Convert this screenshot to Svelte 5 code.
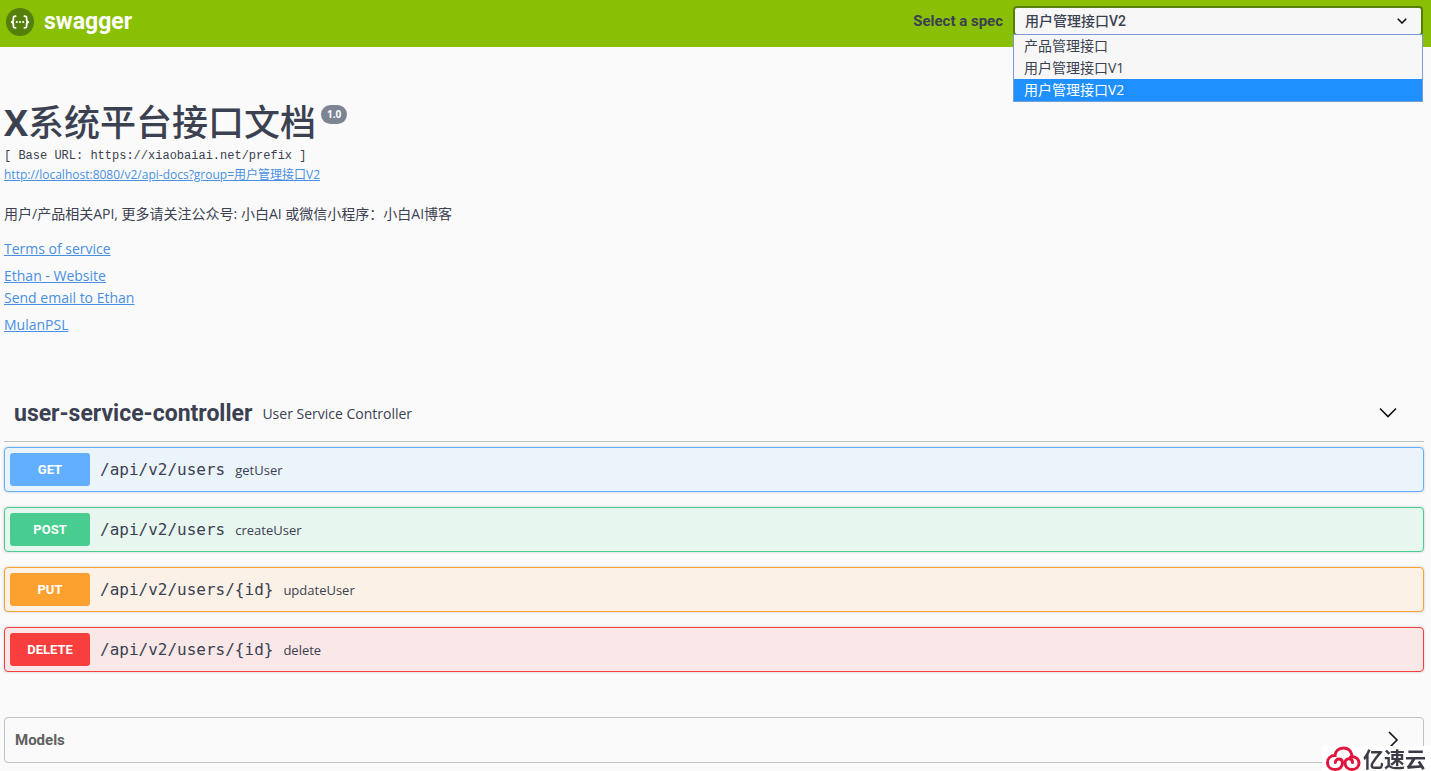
<script lang="ts">
	const specs = ['产品管理接口', '用户管理接口V1', '用户管理接口V2'];

	const operations = [
		{ method: 'get', path: '/api/v2/users', summary: 'getUser' },
		{ method: 'post', path: '/api/v2/users', summary: 'createUser' },
		{ method: 'put', path: '/api/v2/users/{id}', summary: 'updateUser' },
		{ method: 'delete', path: '/api/v2/users/{id}', summary: 'delete' }
	];

	let selected = $state('用户管理接口V2');
	let open = $state(true);

	function pick(spec: string) {
		selected = spec;
		open = false;
	}
</script>

<header class="topbar">
	<a class="logo" href="/">
		<svg width="28" height="28" viewBox="0 0 28 28" fill="none">
			<circle cx="14" cy="14" r="14" fill="#547f0b" />
			<g stroke="#fff" stroke-width="1.8" stroke-linecap="round" stroke-linejoin="round">
				<path d="M9.6 8.2c-2 0-2.3.7-2.2 2.4.1 2 .1 3-1.6 3.4 1.7.4 1.7 1.4 1.6 3.4-.1 1.7.2 2.4 2.2 2.4" />
				<path d="M18.4 8.2c2 0 2.3.7 2.2 2.4-.1 2-.1 3 1.6 3.4-1.7.4-1.7 1.4-1.6 3.4.1 1.7-.2 2.4-2.2 2.4" />
			</g>
			<g fill="#fff">
				<circle cx="10.8" cy="14" r="1.1" />
				<circle cx="14" cy="14" r="1.1" />
				<circle cx="17.2" cy="14" r="1.1" />
			</g>
		</svg>
		<span>swagger</span>
	</a>

	<div class="spec-picker">
		<label for="spec">Select a spec</label>
		<div class="select-wrap">
			<select id="spec" bind:value={selected}>
				{#each specs as spec}
					<option value={spec}>{spec}</option>
				{/each}
			</select>
			<svg class="caret" width="10" height="6" viewBox="0 0 10 6" fill="none" stroke="#111" stroke-width="1.6">
				<path d="M.8.8 5 5 9.2.8" />
			</svg>
			{#if open}
				<ul class="options">
					{#each specs as spec}
						<li>
							<button type="button" class:active={spec === selected} onclick={() => pick(spec)}>{spec}</button>
						</li>
					{/each}
				</ul>
			{/if}
		</div>
	</div>
</header>

<main>
	<section class="info">
		<div class="title">
			<h2><b>X</b>系统平台接口文档</h2>
			<span class="version">1.0</span>
		</div>
		<pre class="base-url">[ Base URL: https://xiaobaiai.net/prefix ]</pre>
		<a class="docs" href="http://localhost:8080/v2/api-docs?group=用户管理接口V2">http://localhost:8080/v2/api-docs?group=用户管理接口V2</a>
		<p>用户/产品相关API, 更多请关注公众号: 小白AI 或微信小程序：小白AI博客</p>
		<div class="links">
			<a href="#terms">Terms of service</a>
			<div class="contact">
				<a href="#website">Ethan - Website</a>
				<a href="#email">Send email to Ethan</a>
			</div>
			<a href="#license">MulanPSL</a>
		</div>
	</section>

	<section>
		<div class="tag">
			<h3>user-service-controller</h3>
			<small>User Service Controller</small>
			<button type="button" class="toggle" aria-label="Collapse operations">
				<svg width="20" height="20" viewBox="0 0 20 20" fill="none" stroke="#111" stroke-width="1.6">
					<path d="m2 4.5 8 8 8-8" />
				</svg>
			</button>
		</div>
		<div class="operations">
			{#each operations as op}
				<div class="opblock {op.method}">
					<button type="button" class="method">{op.method.toUpperCase()}</button>
					<span class="path">{op.path}</span>
					<span class="summary">{op.summary}</span>
				</div>
			{/each}
		</div>
	</section>

	<section class="models">
		<h4>Models</h4>
		<button type="button" class="toggle" aria-label="Expand models">
			<svg width="20" height="20" viewBox="0 0 20 20" fill="none" stroke="#111" stroke-width="1.6">
				<path d="m6 2 8 8-8 8" />
			</svg>
		</button>
	</section>
</main>

<div class="watermark">
	<svg width="36" height="25" viewBox="0 0 36 25" fill="none" stroke="#e0143c" stroke-width="3" stroke-linecap="round">
		<path d="M27 9.500C26 4.500 22.500 2 18.500 2 13.500 2 10 5.500 10 9.500 5.500 9.500 2.500 12.500 2.500 16.500s3 7 7.500 7c4.500 0 7.500-2.500 7.500-6.500 0-2.500-1.500-4-3.500-4s-3.700 1.600-3.700 3.500" />
		<path d="M25.500 11c5-1 8.500 2 8.500 6 0 4-3 6.500-7 6.500-4.500 0-7-3-7-6.500 0-2.500 1.700-4.200 3.800-4.200 2.200 0 3.700 1.500 3.700 3.700" />
	</svg>
	<span>亿速云</span>
</div>

<style>
	:global(body) {
		margin: 0;
		background: #fafafa;
		color: #3b4151;
		font-family: 'Open Sans', 'Noto Sans CJK SC', sans-serif;
		font-size: 14px;
	}

	h2,
	h3,
	h4,
	p,
	pre,
	ul {
		margin: 0;
		padding: 0;
	}

	button {
		border: 0;
		padding: 0;
		background: transparent;
		color: inherit;
		font: inherit;
		cursor: pointer;
	}

	.topbar {
		display: flex;
		align-items: flex-start;
		justify-content: space-between;
		box-sizing: border-box;
		height: 47px;
		padding: 6px 8px 0 6px;
		background: #89bf04;
	}

	.logo {
		display: flex;
		align-items: center;
		gap: 10px;
		height: 32px;
		color: #fff;
		font: 700 23px/32px Roboto, sans-serif;
		text-decoration: none;
	}

	.spec-picker {
		display: flex;
		align-items: center;
		gap: 10px;
	}

	.spec-picker label {
		font: 700 15px/30px Roboto, sans-serif;
	}

	.select-wrap {
		position: relative;
		width: 410px;
	}

	select {
		display: block;
		width: 100%;
		height: 30px;
		padding: 0 10px;
		border: 2px solid #547f00;
		border-radius: 4px;
		outline: 0;
		appearance: none;
		background: #f7f7f7;
		color: #3b4151;
		font: 500 14px/24px Roboto, 'Noto Sans CJK SC', sans-serif;
	}

	.caret {
		position: absolute;
		top: 12px;
		right: 16px;
		pointer-events: none;
	}

	.options {
		position: absolute;
		top: 28px;
		left: 0;
		right: 0;
		z-index: 1;
		border: 1px solid #7a9cd3;
		background: #f7f7f7;
		list-style: none;
	}

	.options button {
		display: block;
		width: 100%;
		padding: 0 10px;
		font: 14px/22px 'Open Sans', 'Noto Sans CJK SC', sans-serif;
		text-align: left;
	}

	.options .active {
		background: #1e90ff;
		color: #fff;
	}

	main {
		padding: 51px 7px 0 4px;
	}

	.info {
		display: flex;
		flex-direction: column;
		align-items: flex-start;
	}

	a {
		color: #4990e2;
	}

	.title {
		display: flex;
		align-items: flex-start;
		gap: 5px;
	}

	h2 {
		font: 500 36px/50px 'Open Sans', 'Noto Sans CJK SC', sans-serif;
	}

	h2 b {
		font-family: 'Open Sans', sans-serif;
		font-weight: 700;
	}

	.version {
		margin-top: 7px;
		padding: 0 6px;
		border-radius: 10px;
		background: #7d8492;
		color: #fff;
		font: 700 10px/19px 'Open Sans', sans-serif;
	}

	.base-url {
		font: 12px/16px 'Liberation Mono', monospace;
	}

	.docs {
		font-size: 12px;
		line-height: 22px;
	}

	.info p {
		margin-top: 17px;
		line-height: 22px;
	}

	.links {
		display: flex;
		flex-direction: column;
		align-items: flex-start;
		gap: 5px;
		margin-top: 13px;
		line-height: 22px;
	}

	.contact {
		display: flex;
		flex-direction: column;
		align-items: flex-start;
	}

	.tag {
		display: flex;
		align-items: center;
		gap: 10px;
		margin-top: 50px;
		padding: 10px 26px 10px 10px;
		border-bottom: 1px solid #c0c1c5;
	}

	h3 {
		font: 700 23px/35px Roboto, sans-serif;
	}

	small {
		font-size: 14px;
	}

	.toggle {
		display: flex;
		margin-left: auto;
	}

	.operations {
		display: flex;
		flex-direction: column;
		gap: 15px;
		padding-top: 5px;
	}

	.opblock {
		--color: #61affe;
		display: flex;
		align-items: center;
		gap: 10px;
		padding: 5px;
		border: 1px solid var(--color);
		border-radius: 4px;
		background: #ebf3fb;
		box-shadow: 0 0 3px rgba(0, 0, 0, 0.19);
	}

	.post {
		--color: #49cc90;
		background: #e8f6f0;
	}

	.put {
		--color: #fca130;
		background: #fbf1e6;
	}

	.delete {
		--color: #f93e3e;
		background: #fae7e7;
	}

	.method {
		width: 80px;
		border-radius: 3px;
		background: var(--color);
		color: #fff;
		font: 700 13px/33px Roboto, sans-serif;
	}

	.path {
		font: 16px/24px 'DejaVu Sans Mono', monospace;
	}

	.summary {
		font-size: 13px;
	}

	.models {
		display: flex;
		align-items: center;
		margin-top: 45px;
		padding: 10px 20px 10px 10px;
		border: 1px solid #c0c1c5;
		border-radius: 4px;
	}

	h4 {
		color: #606060;
		font: 700 15px/24px Roboto, sans-serif;
	}

	.watermark {
		position: fixed;
		right: 0;
		bottom: 0;
		display: flex;
		align-items: center;
		gap: 2px;
		padding: 0 5px 0 3px;
		background: #fff;
		color: #3c3c46;
		font: 700 21px/25px 'Noto Sans CJK SC', sans-serif;
	}
</style>
